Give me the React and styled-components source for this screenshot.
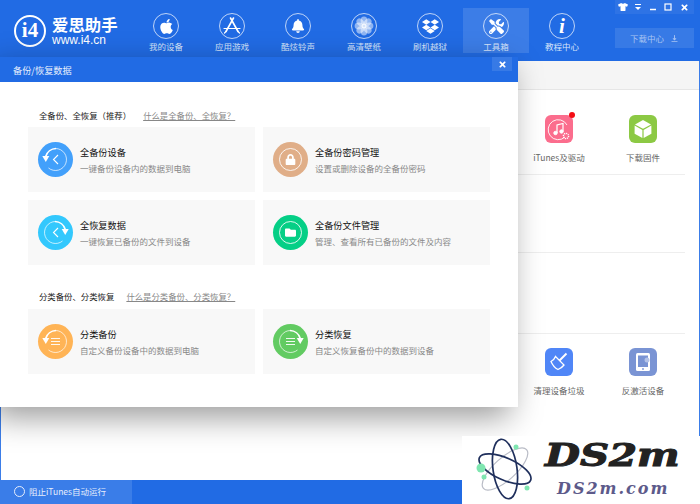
import styled, { createGlobalStyle } from "styled-components";
import { FaApple, FaBell, FaDropbox, FaTools, FaTshirt, FaLock, FaFolder, FaTimes } from "react-icons/fa";
import { HiDownload } from "react-icons/hi";

const GlobalStyle = createGlobalStyle`
  html, body {
    margin: 0;
    padding: 0;
    background: #fff;
  }
  * {
    box-sizing: border-box;
  }
  body {
    font-family: "Noto Sans CJK SC", "Liberation Sans", sans-serif;
  }
`;

const Window = styled.div`
  position: relative;
  width: 700px;
  height: 504px;
  overflow: hidden;
  display: flex;
  flex-direction: column;
  background: #fff;
`;

const Header = styled.header`
  height: 61px;
  flex-shrink: 0;
  display: flex;
  background: #216be4;
`;

const Brand = styled.div`
  width: 133px;
  padding-left: 14px;
  display: flex;
  align-items: center;
  gap: 6px;
  color: #fff;
`;

const BrandMark = styled.div`
  width: 32px;
  height: 32px;
  border-radius: 50%;
  border: 2px solid #fff;
  display: flex;
  align-items: center;
  justify-content: center;
  font: bold 21px/1 "Liberation Serif", serif;
`;

const BrandText = styled.div`
  display: flex;
  flex-direction: column;
  gap: 1px;
`;

const BrandName = styled.div`
  height: 17px;
  font-size: 16.4px;
  line-height: 17px;
  font-weight: 700;
  white-space: nowrap;
`;

const BrandUrl = styled.div`
  font: 12px/12px "Liberation Sans", sans-serif;
`;

const Nav = styled.nav`
  display: flex;
`;

const NavItem = styled.div`
  width: 66px;
  height: 45px;
  margin-top: 8px;
  padding-top: 5px;
  display: flex;
  flex-direction: column;
  align-items: center;
  gap: 1px;
  color: #d6e3fa;
  font-size: 8.5px;
  line-height: 12px;
  background: ${(props) => (props.$active ? "rgba(255, 255, 255, 0.12)" : "transparent")};
`;

const NavCircle = styled.div`
  width: 26px;
  height: 26px;
  border-radius: 50%;
  border: 1px solid rgba(255, 255, 255, 0.7);
  display: flex;
  align-items: center;
  justify-content: center;
  color: #fff;
  font-size: ${(props) => props.$size || 15}px;
`;

const InfoLetter = styled.span`
  font: italic 700 21px/1 "Liberation Serif", serif;
`;

const Side = styled.div`
  width: 79px;
  margin-left: 20px;
  display: flex;
  flex-direction: column;
  gap: 14px;
`;

const WinControls = styled.div`
  display: flex;
  height: 14px;
`;

const WinButton = styled.div`
  width: ${(props) => props.$width || 15}px;
  display: flex;
  align-items: center;
  justify-content: center;
  color: #fff;
  font-size: ${(props) => props.$size || 9}px;
  background: rgba(255, 255, 255, 0.06);
`;

const DownloadButton = styled.div`
  height: 20px;
  display: flex;
  align-items: center;
  justify-content: center;
  gap: 6px;
  font-size: 8.5px;
  color: #a9c5f3;
  background: rgba(255, 255, 255, 0.1);
`;

const Main = styled.main`
  flex: 1;
  display: flex;
  flex-direction: column;
  border-left: 1px solid #3b7de8;
  border-right: 1px solid #3b7de8;
`;

const ToolStrip = styled.div`
  height: 29px;
  background: #f5f5f5;
  border-bottom: 1px solid #e6e6e6;
`;

const Shelf = styled.section`
  height: ${(props) => props.$height}px;
  margin-right: 14px;
  padding-top: ${(props) => props.$top || 0}px;
  display: flex;
  justify-content: flex-end;
  border-bottom: ${(props) => (props.$last ? "none" : "1px solid #eeeeee")};
`;

const Tile = styled.div`
  width: 84px;
  display: flex;
  flex-direction: column;
  align-items: center;
  gap: 7px;
  font-size: 8.5px;
  line-height: 14px;
  color: #666;
`;

const TileIcon = styled.div`
  position: relative;
  width: 28px;
  height: 28px;
  border-radius: 6px;
  display: flex;
  align-items: center;
  justify-content: center;
  color: #fff;
  background: ${(props) => props.$color};
`;

const RedDot = styled.span`
  position: absolute;
  top: -3px;
  right: -2px;
  width: 6px;
  height: 6px;
  border-radius: 50%;
  background: #f40d14;
`;

const StatusBar = styled.footer`
  height: 24px;
  flex-shrink: 0;
  display: flex;
  background: #216be4;
`;

const ItunesToggle = styled.div`
  width: 132px;
  padding-left: 14px;
  padding-bottom: 2px;
  display: flex;
  align-items: center;
  gap: 4px;
  color: #e6eefc;
  font-size: 8.5px;
  background: #3a7de8;
`;

const Radio = styled.span`
  width: 11px;
  height: 11px;
  border-radius: 50%;
  border: 1px solid #e6eefc;
`;

const Dialog = styled.div`
  position: absolute;
  top: 57px;
  left: 0;
  width: 518px;
  height: 350px;
  background: #fff;
  box-shadow: -8px 10px 30px rgba(0, 0, 0, 0.4);
`;

const DialogTitle = styled.div`
  height: 25px;
  padding-left: 13px;
  display: flex;
  align-items: center;
  justify-content: space-between;
  color: #e8f0fd;
  font-size: 9.2px;
  background: #216be4;
`;

const DialogClose = styled.div`
  width: 20px;
  height: 14px;
  margin-right: 6px;
  align-self: flex-start;
  display: flex;
  align-items: center;
  justify-content: center;
  color: #fff;
  font-size: 9px;
  background: rgba(255, 255, 255, 0.1);
`;

const DialogBody = styled.div`
  padding: 26px 28px 0;
`;

const SectionHead = styled.div`
  height: 14px;
  margin-top: ${(props) => props.$top || 0}px;
  margin-bottom: ${(props) => props.$bottom || 5}px;
  padding-left: 11px;
  display: flex;
  align-items: center;
  gap: 12px;
  font-size: 8.4px;
  color: #222;
`;

const HelpLink = styled.a`
  font-size: 8.4px;
  color: #888;
  text-decoration: underline;
`;

const CardGrid = styled.div`
  display: grid;
  grid-template-columns: 227px 227px;
  gap: 8px;
`;

const Card = styled.div`
  height: 65px;
  padding-left: 10px;
  display: flex;
  align-items: center;
  gap: 7px;
  background: #f8f8f8;
`;

const Disc = styled.div`
  width: 35px;
  height: 35px;
  flex-shrink: 0;
  border-radius: 50%;
  display: flex;
  align-items: center;
  justify-content: center;
  color: #fff;
  background: ${(props) => props.$color};
`;

const Ring = styled.div`
  width: 23px;
  height: 23px;
  border-radius: 50%;
  border: 1px solid rgba(255, 255, 255, 0.85);
  display: flex;
  align-items: center;
  justify-content: center;
  font-size: 11px;
`;

const CardText = styled.div`
  display: flex;
  flex-direction: column;
  gap: 2px;
`;

const CardTitle = styled.div`
  font-size: 9.2px;
  line-height: 14px;
  color: #111;
`;

const CardDesc = styled.div`
  font-size: 8.5px;
  line-height: 14px;
  color: #888;
`;

const Watermark = styled.aside`
  position: absolute;
  right: 0;
  bottom: 0;
  width: 238px;
  height: 68px;
  padding: 1px 0 0 83px;
  display: flex;
  flex-direction: column;
  align-items: flex-start;
  background: #fff;
`;

const AtomSlot = styled.div`
  position: absolute;
  left: 12px;
  top: 2px;
`;

const MarkTitle = styled.div`
  font: italic 700 31px/36px "DejaVu Serif", serif;
  color: #222;
  -webkit-text-stroke: 1px #222;
  transform: scaleX(1.3);
  transform-origin: left center;
`;

const MarkUrl = styled.div`
  margin-top: 5px;
  padding-left: 12px;
  font: italic 700 16px/22px "DejaVu Serif", serif;
  letter-spacing: 2px;
  color: #5d5a8a;
`;

function ArrowGlyph({ mirrored, inner }) {
  return (
    <svg width="35" height="35" viewBox="0 0 35 35" fill="none" stroke="#fff">
      <g transform={mirrored ? "translate(35 0) scale(-1 1)" : undefined}>
        <path d="M17.5 6.500a11 11 0 1 1-7 19.500" strokeWidth="0.7" />
        <path d="M18 6.500a11 11 0 0 0-10.300 8" strokeWidth="1.700" />
        <path d="M4.300 14h7l-3.500 6z" fill="#fff" stroke="none" />
      </g>
      {inner === "chevron" ? (
        <path d="M20 13l-4.500 4.500 4.500 4.500" strokeWidth="1.100" />
      ) : (
        <path d="M13 14.500h9M13 17.500h9M13 20.500h9" strokeWidth="0.900" />
      )}
    </svg>
  );
}

function AppStoreGlyph() {
  return (
    <svg width="20" height="20" viewBox="0 0 20 20" fill="none" stroke="#fff" strokeWidth="1.600" strokeLinecap="round">
      <path d="M11.500 2L4 15.500" />
      <path d="M8.500 2L16 15.500" />
      <path d="M2 12.500h16" strokeWidth="1.200" />
      <path d="M2.500 17l1.500-1.500M17.500 17L16 15.500" strokeWidth="1.200" />
    </svg>
  );
}

function FlowerGlyph() {
  return (
    <svg width="20" height="20" viewBox="0 0 20 20" fill="#fff">
      {[0, 45, 90, 135, 180, 225, 270, 315].map((angle) => (
        <ellipse key={angle} cx="10" cy="4.800" rx="3.400" ry="4.200" opacity="0.500" transform={`rotate(${angle} 10 10)`} />
      ))}
      <circle cx="10" cy="10" r="2.500" opacity="0.800" />
    </svg>
  );
}

function ItunesGlyph() {
  return (
    <svg width="24" height="24" viewBox="0 0 24 24" fill="none" stroke="#fff">
      <path d="M20 8a10 10 0 1 0-2 12" strokeWidth="0.900" />
      <circle cx="8.500" cy="16" r="1.700" fill="#fff" />
      <circle cx="14.500" cy="14.500" r="1.700" fill="#fff" />
      <path d="M10 16V8l6-1.500v8" strokeWidth="1.200" />
      <circle cx="19" cy="19" r="2.600" strokeWidth="1.400" strokeDasharray="1.200 0.800" />
    </svg>
  );
}

function CubeGlyph() {
  return (
    <svg width="20" height="20" viewBox="0 0 20 20" fill="#fff">
      <path d="M10 1l8 4.400-8 4.400-8-4.400z" />
      <path d="M1.600 6.600l7.800 4.300V19l-7.800-4.300z" />
      <path d="M18.400 6.600l-7.800 4.300V19l7.800-4.300z" />
    </svg>
  );
}

function BroomGlyph() {
  return (
    <svg width="22" height="22" viewBox="0 0 22 22" fill="none" stroke="#fff" strokeWidth="1.300">
      <path d="M7.500 5.500l8.500 8.500c-1.500 2-3.500 3.500-6 4.500-2-1-5.500-4.500-7-8 2-1 3.500-2.500 4.500-5z" />
      <path d="M11.500 9.500l7-7" strokeWidth="2" />
    </svg>
  );
}

function TabletGlyph() {
  return (
    <svg width="22" height="22" viewBox="0 0 22 22" fill="none">
      <rect x="4" y="2" width="14" height="18" rx="1.500" fill="#fff" />
      <rect x="6" y="4.500" width="10" height="11.500" fill="#7a94d4" />
      <circle cx="11" cy="18" r="0.900" fill="#7a94d4" />
      <circle cx="15" cy="9" r="2.500" fill="#b4c3e8" />
    </svg>
  );
}

function AtomGlyph() {
  return (
    <svg width="66" height="64" viewBox="0 0 66 64" fill="none">
      <ellipse cx="31" cy="31" rx="29" ry="11" stroke="#b9bcc6" strokeWidth="1.200" transform="rotate(-42 31 31)" />
      <ellipse cx="31" cy="31" rx="28" ry="11" stroke="#1f2f5c" strokeWidth="1.700" transform="rotate(24 31 31)" />
      <ellipse cx="31" cy="31" rx="30" ry="12" stroke="#1f2f5c" strokeWidth="1.700" transform="rotate(82 31 31)" />
      <circle cx="42" cy="9" r="2.500" fill="#7fe6b0" />
      <circle cx="7" cy="30" r="4.500" fill="#7fe6b0" />
      <circle cx="10" cy="39" r="2.500" fill="#7fe6b0" />
      <circle cx="53" cy="50" r="2.500" fill="#7fe6b0" />
    </svg>
  );
}

function MaximizeGlyph() {
  return (
    <svg width="8" height="8" viewBox="0 0 8 8" fill="none" stroke="#fff" strokeWidth="1.200">
      <rect x="1" y="1" width="6" height="6" />
    </svg>
  );
}

function MinimizeGlyph() {
  return (
    <svg width="8" height="8" viewBox="0 0 8 8" stroke="#fff" strokeWidth="1.500">
      <path d="M1 6.500h6" />
    </svg>
  );
}

function DropGlyph() {
  return (
    <svg width="8" height="8" viewBox="0 0 8 8" fill="#fff">
      <rect x="1" y="1" width="6" height="1" />
      <path d="M1 4h6L4 7z" />
    </svg>
  );
}

const navItems = [
  { label: "我的设备", icon: <FaApple />, size: 17 },
  { label: "应用游戏", icon: <AppStoreGlyph /> },
  { label: "酷炫铃声", icon: <FaBell />, size: 14 },
  { label: "高清壁纸", icon: <FlowerGlyph /> },
  { label: "刷机越狱", icon: <FaDropbox />, size: 17 },
  { label: "工具箱", icon: <FaTools />, active: true },
  { label: "教程中心", icon: <InfoLetter>i</InfoLetter> },
];

const fullCards = [
  { title: "全备份设备", desc: "一键备份设备内的数据到电脑", color: "#42a0fb", icon: <ArrowGlyph inner="chevron" /> },
  { title: "全备份密码管理", desc: "设置或删除设备的全备份密码", color: "#e0ae88", icon: <Ring><FaLock /></Ring> },
  { title: "全恢复数据", desc: "一键恢复已备份的文件到设备", color: "#33c8fd", icon: <ArrowGlyph mirrored inner="chevron" /> },
  { title: "全备份文件管理", desc: "管理、查看所有已备份的文件及内容", color: "#05cf86", icon: <Ring><FaFolder /></Ring> },
];

const partCards = [
  { title: "分类备份", desc: "自定义备份设备中的数据到电脑", color: "#ffb456", icon: <ArrowGlyph inner="lines" /> },
  { title: "分类恢复", desc: "自定义恢复备份中的数据到设备", color: "#62cb62", icon: <ArrowGlyph mirrored inner="lines" /> },
];

function BackupCard({ title, desc, color, icon }) {
  return (
    <Card>
      <Disc $color={color}>{icon}</Disc>
      <CardText>
        <CardTitle>{title}</CardTitle>
        <CardDesc>{desc}</CardDesc>
      </CardText>
    </Card>
  );
}

export default function App() {
  return (
    <Window>
      <GlobalStyle />
      <Header>
        <Brand>
          <BrandMark>i4</BrandMark>
          <BrandText>
            <BrandName>爱思助手</BrandName>
            <BrandUrl>www.i4.cn</BrandUrl>
          </BrandText>
        </Brand>
        <Nav>
          {navItems.map((item) => (
            <NavItem key={item.label} $active={item.active}>
              <NavCircle $size={item.size}>{item.icon}</NavCircle>
              {item.label}
            </NavItem>
          ))}
        </Nav>
        <Side>
          <WinControls>
            <WinButton $size={10}><FaTshirt /></WinButton>
            <WinButton><DropGlyph /></WinButton>
            <WinButton><MinimizeGlyph /></WinButton>
            <WinButton><MaximizeGlyph /></WinButton>
            <WinButton $width={19}><FaTimes /></WinButton>
          </WinControls>
          <DownloadButton>
            下载中心
            <HiDownload size={9} />
          </DownloadButton>
        </Side>
      </Header>

      <Main>
        <ToolStrip />
        <Shelf $height={85} $top={25}>
          <Tile>
            <TileIcon $color="#fb6d8d">
              <ItunesGlyph />
              <RedDot />
            </TileIcon>
            iTunes及驱动
          </Tile>
          <Tile>
            <TileIcon $color="#8cc944">
              <CubeGlyph />
            </TileIcon>
            下载固件
          </Tile>
        </Shelf>
        <Shelf $height={78} />
        <Shelf $height={81} />
        <Shelf $last $top={14}>
          <Tile>
            <TileIcon $color="#5086f7">
              <BroomGlyph />
            </TileIcon>
            清理设备垃圾
          </Tile>
          <Tile>
            <TileIcon $color="#7a94d4">
              <TabletGlyph />
            </TileIcon>
            反激活设备
          </Tile>
        </Shelf>
      </Main>

      <StatusBar>
        <ItunesToggle>
          <Radio />
          阻止iTunes自动运行
        </ItunesToggle>
      </StatusBar>

      <Dialog>
        <DialogTitle>
          备份/恢复数据
          <DialogClose><FaTimes /></DialogClose>
        </DialogTitle>
        <DialogBody>
          <SectionHead>
            全备份、全恢复（推荐）
            <HelpLink>什么是全备份、全恢复？</HelpLink>
          </SectionHead>
          <CardGrid>
            {fullCards.map((card) => (
              <BackupCard key={card.title} {...card} />
            ))}
          </CardGrid>
          <SectionHead $top={24} $bottom={6}>
            分类备份、分类恢复
            <HelpLink>什么是分类备份、分类恢复？</HelpLink>
          </SectionHead>
          <CardGrid>
            {partCards.map((card) => (
              <BackupCard key={card.title} {...card} />
            ))}
          </CardGrid>
        </DialogBody>
      </Dialog>

      <Watermark>
        <AtomSlot>
          <AtomGlyph />
        </AtomSlot>
        <MarkTitle>DS2m</MarkTitle>
        <MarkUrl>DS2m.com</MarkUrl>
      </Watermark>
    </Window>
  );
}
